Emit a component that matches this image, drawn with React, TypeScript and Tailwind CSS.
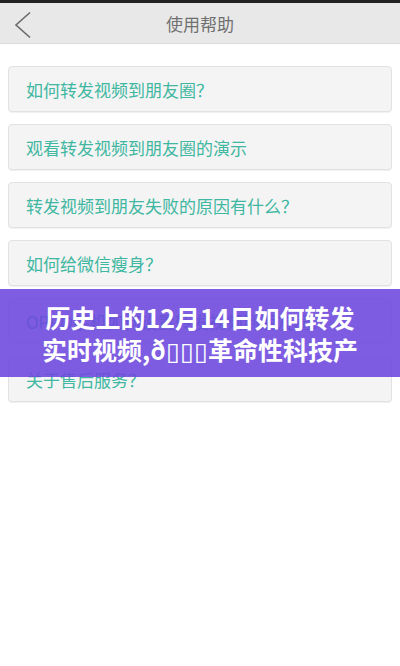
import React from "react";

const items = [
  "如何转发视频到朋友圈？",
  "观看转发视频到朋友圈的演示",
  "转发视频到朋友失败的原因有什么？",
  "如何给微信瘦身？",
  "OPPO手机如何设置转发视频到朋友圈？",
  "关于售后服务？",
];

export default function App() {
  return (
    <div
      className="relative w-[400px] h-[666px] bg-white overflow-hidden"
      style={{ fontFamily: '"Noto Sans CJK SC", "Noto Sans", sans-serif' }}
    >
      {/* Header */}
      <div className="h-[3px] bg-[#222]" />
      <header className="relative h-[41px] bg-[#e8e8e8] border-b border-[#dcdcdc] flex items-center justify-center">
        <svg
          className="absolute left-[13px] top-[8px]"
          width="20"
          height="28"
          viewBox="0 0 20 28"
          fill="none"
          stroke="#6a6a6a"
          strokeWidth="1.6"
        >
          <path d="M17 1.5 L3 14 L17 26.5" />
        </svg>
        <h1 className="text-[17px] text-[#707070] leading-none">使用帮助</h1>
      </header>

      {/* List */}
      <main className="px-2 pt-[22px] flex flex-col gap-[12px]">
        {items.map((t) => (
          <div
            key={t}
            className="h-[46px] rounded-[4px] border border-[#e2e2e2] bg-[#f4f4f4] shadow-[0_1px_1px_rgba(0,0,0,0.06)] flex items-center pl-[17px]"
          >
            <span className="text-[17px] text-[#40b7a1] leading-none">{t}</span>
          </div>
        ))}
      </main>

      {/* Overlay banner */}
      <div className="absolute left-0 right-0 top-[289px] h-[88px] bg-[#6c47de]/[0.88] flex items-center justify-center">
        <p className="text-white font-bold text-[25px] leading-[32px] text-center w-[330px]">
          历史上的12月14日如何转发实时视频,ð<span className="font-normal">▯▯▯</span>革命性科技产
        </p>
      </div>
    </div>
  );
}
